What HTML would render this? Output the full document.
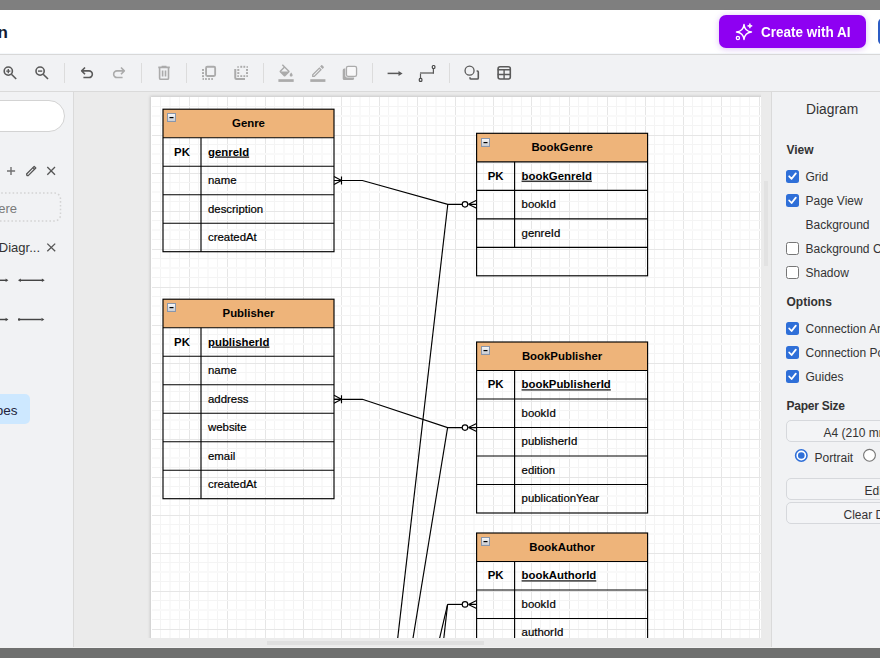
<!DOCTYPE html>
<html><head><meta charset="utf-8">
<style>
*{box-sizing:border-box;margin:0;padding:0}
html,body{width:880px;height:658px;overflow:hidden;background:#fff;font-family:"Liberation Sans",sans-serif}
.abs{position:absolute}
#topstripe{left:0;top:0;width:880px;height:10px;background:#7f7f7f}
#header{left:0;top:10px;width:880px;height:43px;background:#fff;border-bottom:1px solid #f5f8fb;height:44px}
#title{left:-2.5px;top:23px;font-size:17px;font-weight:bold;color:#141a33;line-height:20px;white-space:nowrap}
#aibtn{left:719px;top:15px;width:147px;height:33px;border-radius:7px;background:#8e00f2;box-shadow:0 1px 6px rgba(120,0,220,.25)}
#aitext{left:761px;top:22.5px;font-size:14.5px;font-weight:bold;color:#fff;line-height:18px;white-space:nowrap;transform:scaleX(0.93);transform-origin:0 0}
#bluebtn{left:878px;top:18px;width:20px;height:27px;border-radius:5px;background:#2c5cc5}
#tbtop{left:0;top:54px;width:880px;height:1px;background:#d8d8d8}
#toolbar{left:0;top:55px;width:880px;height:36px;background:#f1f2f4}
#tbbot{left:0;top:91px;width:880px;height:1px;background:#dadada}
#sidebar{left:0;top:92px;width:73px;height:555px;background:#f1f2f4}
#sbborder{left:73px;top:92px;width:1px;height:555px;background:#dadada}
#canvasbg{left:74px;top:92px;width:697px;height:555px;background:#ebebeb}
#rpborder{left:771px;top:92px;width:1px;height:555px;background:#dadada}
#rpanel{left:772px;top:92px;width:108px;height:555px;background:#f1f2f4}
#botline{left:0;top:647px;width:880px;height:1px;background:#f2f2f2}
#botstripe{left:0;top:648px;width:880px;height:10px;background:#6f706f}
.sep{position:absolute;top:63px;width:1px;height:20px;background:#dcdcdc}
svg{position:absolute;left:0;top:0;overflow:visible}
.th{font:bold 11.4px "Liberation Sans",sans-serif;fill:#000}
.tb{font:bold 11.4px "Liberation Sans",sans-serif;fill:#000;text-decoration:underline}
.tr{font:11.4px "Liberation Sans",sans-serif;fill:#000;stroke:#000;stroke-width:0.2}
.ln{stroke:#000;stroke-width:1.15;fill:none}
.cn{stroke:#000;stroke-width:1.15}
.rp{position:absolute;font-size:12px;color:#333;line-height:14px;white-space:nowrap}
.rpb{position:absolute;font-size:12px;font-weight:bold;color:#333;line-height:14px;white-space:nowrap}
.cb{position:absolute;left:786px;width:13px;height:13px;border-radius:2.5px;background:#2f6fd8}
.cbu{position:absolute;left:786px;width:13px;height:13px;border-radius:2.5px;background:#fff;border:1px solid #767676}
.btn{position:absolute;left:786px;width:110px;border:1px solid #d6d8dc;border-radius:5px;background:#f3f4f6}
</style></head><body>
<div id="topstripe" class="abs"></div>
<div id="header" class="abs"></div>
<div id="title" class="abs">n</div>
<div id="aibtn" class="abs"></div>
<svg width="880" height="60" style="left:0;top:0">
  <path d="M744,24.5 Q744.7,31.3 751.5,32 Q744.7,32.7 744,39.5 Q743.3,32.7 736.5,32 Q743.3,31.3 744,24.5 Z" fill="none" stroke="#fff" stroke-width="1.45" stroke-linejoin="round"/>
  <path d="M749.9,23.6 C750.1,25.3 750.5,25.7 752.2,25.9 C750.5,26.1 750.1,26.5 749.9,28.2 C749.7,26.5 749.3,26.1 747.6,25.9 C749.3,25.7 749.7,25.3 749.9,23.6Z" fill="#fff" stroke="#fff" stroke-width="1"/>
  <circle cx="737.9" cy="38" r="1.6" fill="none" stroke="#fff" stroke-width="1.3"/>
</svg>
<div id="aitext" class="abs">Create with AI</div>
<div id="bluebtn" class="abs"></div>
<div id="tbtop" class="abs"></div>
<div id="toolbar" class="abs"></div>
<div id="tbbot" class="abs"></div>
<div class="sep" style="left:64px"></div>
<div class="sep" style="left:141px"></div>
<div class="sep" style="left:186px"></div>
<div class="sep" style="left:263px"></div>
<div class="sep" style="left:372px"></div>
<div class="sep" style="left:449px"></div>
<svg width="880" height="92" style="left:0;top:0">
 <g fill="none" stroke="#5a5a5a" stroke-width="1.6" stroke-linecap="butt">
  <circle cx="8.3" cy="71.1" r="4.1"/><path d="M11.4,74.2 L16.2,79"/><path d="M6.2,71.1 H10.4 M8.3,69 V73.2" stroke-width="1.4"/>
  <circle cx="40.1" cy="71.1" r="4.1"/><path d="M43.2,74.2 L48,79"/><path d="M38,71.1 H42.2" stroke-width="1.4"/>
  <path d="M85,67.5 L81.7,70.85 L85,74.2 M81.7,70.85 H89 A3.35,3.35 0 0 1 89,77.55 H83.4" stroke-linejoin="round"/>
 </g>
 <g fill="none" stroke="#ababab" stroke-width="1.6">
  <path d="M121,67.5 L124.3,70.85 L121,74.2 M124.3,70.85 H117 A3.35,3.35 0 0 0 117,77.55 H122.6" stroke-linejoin="round"/>
  <path d="M158.3,67.4 H169.8 M162.4,67.4 V66.5 H165.7 V67.4"/>
  <path d="M159.6,67.6 V78.2 Q159.6,79.3 160.7,79.3 H167.4 Q168.5,79.3 168.5,78.2 V67.6"/>
  <path d="M162.6,70.6 V76.6 M165.5,70.6 V76.6"/>
  <rect x="206.05" y="66.75" width="9.1" height="9.2" rx="1.2" stroke-width="1.85"/>
  <path d="M235.25,69 V77.8 Q235.25,79 236.45,79 H245" stroke-width="2"/>
 </g>
 <g fill="#ababab">
  <rect x="202" y="69" width="2" height="1.9"/><rect x="202" y="72.1" width="2" height="1.9"/><rect x="202" y="75.2" width="2" height="1.9"/>
  <rect x="202.5" y="78.1" width="1.5" height="1.8"/><rect x="205" y="78.1" width="1.9" height="1.8"/><rect x="208.1" y="78.1" width="1.9" height="1.8"/><rect x="211.2" y="78.1" width="1.8" height="1.8"/>
  <rect x="237.3" y="66.2" width="1.5" height="1.6"/><rect x="240.3" y="65.8" width="1.9" height="2"/><rect x="243.4" y="65.8" width="1.8" height="2"/><rect x="246.5" y="66.2" width="1.5" height="1.6"/>
  <rect x="237.3" y="69" width="2" height="1.9"/><rect x="237.3" y="72.1" width="2" height="1.9"/><rect x="237.3" y="75.2" width="1.6" height="1.8"/>
  <rect x="246" y="69" width="2" height="1.9"/><rect x="246" y="72.1" width="2" height="1.9"/><rect x="246.3" y="75.2" width="1.6" height="1.8"/>
  <rect x="240.3" y="75.2" width="1.9" height="1.8"/><rect x="243.4" y="75.2" width="1.8" height="1.8"/>
 </g>
 <g fill="none" stroke="#ababab" stroke-width="1.6">
  <rect x="346.45" y="66.35" width="10.1" height="10" rx="1.6" fill="#f8f8f9" stroke-width="1.3"/>
 </g>
 <g fill="#ababab">
  <rect x="278.4" y="79.2" width="15.3" height="2.7"/>
  <rect x="310.3" y="79.2" width="15.1" height="2.7"/>
  <path d="M342.7,70.2 Q342.7,68.6 344.3,68.6 H345.3 V75.8 Q345.3,77.5 347,77.5 H354.1 V78.5 Q354.1,80.1 352.5,80.1 H344.3 Q342.7,80.1 342.7,78.5 Z"/>
  <path transform="translate(277.3,64.2) scale(0.73)" d="M16.56 8.94L7.62 0 6.21 1.41l2.38 2.38-5.15 5.15c-.59.59-.59 1.54 0 2.12l5.5 5.5c.29.29.68.44 1.06.44s.77-.15 1.06-.44l5.5-5.5c.59-.58.59-1.53 0-2.12zM5.21 10L10 5.21 14.79 10H5.21zM19 11.5s-2 2.17-2 3.5c0 1.1.9 2 2 2s2-.9 2-2c0-1.33-2-3.5-2-3.5z"/>
  <path transform="translate(310.1,63.1) scale(0.66)" d="M14.06 9.02l.92.92L5.92 19H5v-.92l9.06-9.06M17.66 3c-.25 0-.51.1-.7.29l-1.83 1.83 3.75 3.75 1.83-1.83c.39-.39.39-1.02 0-1.41l-2.34-2.34c-.2-.2-.45-.29-.71-.29zm-3.6 3.19L3 17.25V21h3.75L17.81 9.94l-3.75-3.75z"/>
 </g>
  <g stroke="#5a5a5a" stroke-width="1.5" fill="none">
  <path d="M387.6,73.4 H399"/>
  <path d="M420.5,78 V73.4" stroke-width="1.2"/><path d="M420,73 H434" stroke="#8a8a8a" stroke-width="1.8"/><path d="M433.4,73.4 V68.8" stroke-width="1.2"/>
  <circle cx="469.55" cy="70.7" r="4.5" stroke-width="1.3"/>
  <path d="M476.6,70.95 H477.2 Q478.3,70.95 478.3,72.05 V77.9 Q478.3,79 477.2,79 H471.1 Q470,79 470,77.9 V77.3" stroke-width="1.6"/>
  <rect x="498.1" y="66.8" width="12.2" height="12.2" rx="2" stroke-width="1.6"/>
  <path d="M497.6,69.7 H510.6 M497.6,74.5 H510.6 M504.1,69.7 V79" stroke-width="1.4"/>
 </g>
 <path d="M398.5,70.9 L402.6,73.4 L398.5,75.9 Z" fill="#5a5a5a"/>
  <rect x="419.3" y="78.3" width="2.6" height="3" rx="0.9" fill="none" stroke="#4a4a4a" stroke-width="1.2"/>
 <rect x="432.3" y="65.5" width="2.6" height="3" rx="0.9" fill="none" stroke="#4a4a4a" stroke-width="1.2"/>
</svg>

<div id="sidebar" class="abs"></div>
<div id="sbborder" class="abs"></div>
<div class="abs" style="left:-40px;top:100px;width:105px;height:32px;border-radius:16px;background:#fff;border:1px solid #d3d3d3"></div>
<svg width="80" height="440" style="left:0;top:0">
 <g stroke="#555" stroke-width="1.5" fill="none">
  <path d="M7,171 H15.1 M11,167 V175" stroke="#707070" stroke-width="1.4"/>
  <path d="M47.3,167 L55,174.8 M55,167 L47.3,174.8" stroke-width="1.3"/>
  <path d="M47.3,243.6 L55.2,251.3 M55.2,243.6 L47.3,251.3" stroke-width="1.3"/>
  <path d="M27,175.5 L26.6,174 L34.2,166.4 L35.8,168 L28.2,175.6 Z" stroke-width="1.3" stroke-linejoin="round"/>
 </g>
 <path d="M32.8,167.6 L34.4,169.2" stroke="#555" stroke-width="1.1"/>
 <rect x="-20" y="193" width="80.5" height="28" rx="6" fill="none" stroke="#d4d4d4" stroke-width="1.5" stroke-dasharray="1.6,2.2"/>
 <g stroke="#444" stroke-width="1.45" fill="none">
  <path d="M-5,280.3 H6"/><path d="M20,280.3 H42"/>
  <path d="M-5,319.5 H6"/><path d="M20,319.5 H41.6"/>
 </g>
 <g fill="#444">
  <path d="M5.6,278.5 L8.4,280.3 L5.6,282.1 Z"/>
  <path d="M20.8,278.5 L18,280.3 L20.8,282.1 Z"/>
  <path d="M41.9,278.5 L44.7,280.3 L41.9,282.1 Z"/>
  <path d="M5.6,317.7 L8.4,319.5 L5.6,321.3 Z"/>
  <rect x="18" y="318.3" width="2.2" height="2.4" rx="0.8"/>
  <path d="M41.5,317.7 L44.3,319.5 L41.5,321.3 Z"/>
 </g>
</svg>
<div class="abs" style="left:-40px;top:200.5px;font-size:13px;color:#7a7a7a;line-height:16px;white-space:nowrap;width:57px;text-align:right">ere</div>
<div class="abs" style="left:-20px;top:240px;font-size:13px;color:#333;line-height:16px;white-space:nowrap;width:60px;text-align:right">Diagr...</div>
<div class="abs" style="left:-30px;top:394px;width:60px;height:30px;border-radius:5px;background:#cde8ff"></div>
<div class="abs" style="left:-20px;top:403px;font-size:13.5px;color:#23233a;line-height:16px;white-space:nowrap;width:37.5px;text-align:right">pes</div>

<div id="canvasbg" class="abs"></div>
<svg width="880" height="658" style="left:0;top:0">
 <defs>
  <linearGradient id="cg" x1="0" y1="0" x2="0" y2="1"><stop offset="0" stop-color="#fafafa"/><stop offset="1" stop-color="#c4c8d0"/></linearGradient>
  <clipPath id="vp"><rect x="74" y="92" width="687" height="546"/></clipPath>
  <filter id="psh" x="-5%" y="-5%" width="110%" height="110%"><feGaussianBlur stdDeviation="1.5"/></filter>
 </defs>
 <g clip-path="url(#vp)">
  <rect x="150" y="96" width="700" height="700" fill="#c8c8c8" filter="url(#psh)"/>
  <rect x="151" y="97" width="700" height="700" fill="#fff"/>
  <rect x="160" y="97" width="1" height="541" fill="#f4f4f4"/>
<rect x="169" y="97" width="2" height="541" fill="#f9f9f9"/>
<rect x="179" y="97" width="1" height="541" fill="#f4f4f4"/>
<rect x="189" y="97" width="1" height="541" fill="#e6e6e6"/>
<rect x="198" y="97" width="1" height="541" fill="#f4f4f4"/>
<rect x="207" y="97" width="2" height="541" fill="#f9f9f9"/>
<rect x="217" y="97" width="1" height="541" fill="#f4f4f4"/>
<rect x="227" y="97" width="1" height="541" fill="#e6e6e6"/>
<rect x="236" y="97" width="1" height="541" fill="#f4f4f4"/>
<rect x="245" y="97" width="2" height="541" fill="#f9f9f9"/>
<rect x="255" y="97" width="1" height="541" fill="#f4f4f4"/>
<rect x="265" y="97" width="1" height="541" fill="#e6e6e6"/>
<rect x="274" y="97" width="1" height="541" fill="#f4f4f4"/>
<rect x="283" y="97" width="2" height="541" fill="#f9f9f9"/>
<rect x="293" y="97" width="1" height="541" fill="#f4f4f4"/>
<rect x="303" y="97" width="1" height="541" fill="#e6e6e6"/>
<rect x="312" y="97" width="1" height="541" fill="#f4f4f4"/>
<rect x="321" y="97" width="2" height="541" fill="#f9f9f9"/>
<rect x="331" y="97" width="1" height="541" fill="#f4f4f4"/>
<rect x="341" y="97" width="1" height="541" fill="#e6e6e6"/>
<rect x="350" y="97" width="1" height="541" fill="#f4f4f4"/>
<rect x="359" y="97" width="2" height="541" fill="#f9f9f9"/>
<rect x="369" y="97" width="1" height="541" fill="#f4f4f4"/>
<rect x="379" y="97" width="1" height="541" fill="#e6e6e6"/>
<rect x="388" y="97" width="1" height="541" fill="#f4f4f4"/>
<rect x="397" y="97" width="2" height="541" fill="#f9f9f9"/>
<rect x="407" y="97" width="1" height="541" fill="#f4f4f4"/>
<rect x="417" y="97" width="1" height="541" fill="#e6e6e6"/>
<rect x="426" y="97" width="1" height="541" fill="#f4f4f4"/>
<rect x="435" y="97" width="2" height="541" fill="#f9f9f9"/>
<rect x="445" y="97" width="1" height="541" fill="#f4f4f4"/>
<rect x="455" y="97" width="1" height="541" fill="#e6e6e6"/>
<rect x="464" y="97" width="1" height="541" fill="#f4f4f4"/>
<rect x="473" y="97" width="2" height="541" fill="#f9f9f9"/>
<rect x="483" y="97" width="1" height="541" fill="#f4f4f4"/>
<rect x="493" y="97" width="1" height="541" fill="#e6e6e6"/>
<rect x="502" y="97" width="1" height="541" fill="#f4f4f4"/>
<rect x="511" y="97" width="2" height="541" fill="#f9f9f9"/>
<rect x="521" y="97" width="1" height="541" fill="#f4f4f4"/>
<rect x="531" y="97" width="1" height="541" fill="#e6e6e6"/>
<rect x="540" y="97" width="1" height="541" fill="#f4f4f4"/>
<rect x="549" y="97" width="2" height="541" fill="#f9f9f9"/>
<rect x="559" y="97" width="1" height="541" fill="#f4f4f4"/>
<rect x="569" y="97" width="1" height="541" fill="#e6e6e6"/>
<rect x="578" y="97" width="1" height="541" fill="#f4f4f4"/>
<rect x="587" y="97" width="2" height="541" fill="#f9f9f9"/>
<rect x="597" y="97" width="1" height="541" fill="#f4f4f4"/>
<rect x="607" y="97" width="1" height="541" fill="#e6e6e6"/>
<rect x="616" y="97" width="1" height="541" fill="#f4f4f4"/>
<rect x="625" y="97" width="2" height="541" fill="#f9f9f9"/>
<rect x="635" y="97" width="1" height="541" fill="#f4f4f4"/>
<rect x="645" y="97" width="1" height="541" fill="#e6e6e6"/>
<rect x="654" y="97" width="1" height="541" fill="#f4f4f4"/>
<rect x="663" y="97" width="2" height="541" fill="#f9f9f9"/>
<rect x="673" y="97" width="1" height="541" fill="#f4f4f4"/>
<rect x="683" y="97" width="1" height="541" fill="#e6e6e6"/>
<rect x="692" y="97" width="1" height="541" fill="#f4f4f4"/>
<rect x="701" y="97" width="2" height="541" fill="#f9f9f9"/>
<rect x="711" y="97" width="1" height="541" fill="#f4f4f4"/>
<rect x="721" y="97" width="1" height="541" fill="#e6e6e6"/>
<rect x="730" y="97" width="1" height="541" fill="#f4f4f4"/>
<rect x="739" y="97" width="2" height="541" fill="#f9f9f9"/>
<rect x="749" y="97" width="1" height="541" fill="#f4f4f4"/>
<rect x="759" y="97" width="1" height="541" fill="#e6e6e6"/>
<rect x="152" y="106" width="609" height="1" fill="#f4f4f4"/>
<rect x="152" y="115" width="609" height="2" fill="#f9f9f9"/>
<rect x="152" y="125" width="609" height="1" fill="#f4f4f4"/>
<rect x="152" y="135" width="609" height="1" fill="#e6e6e6"/>
<rect x="152" y="144" width="609" height="1" fill="#f4f4f4"/>
<rect x="152" y="153" width="609" height="2" fill="#f9f9f9"/>
<rect x="152" y="163" width="609" height="1" fill="#f4f4f4"/>
<rect x="152" y="173" width="609" height="1" fill="#e6e6e6"/>
<rect x="152" y="182" width="609" height="1" fill="#f4f4f4"/>
<rect x="152" y="191" width="609" height="2" fill="#f9f9f9"/>
<rect x="152" y="201" width="609" height="1" fill="#f4f4f4"/>
<rect x="152" y="211" width="609" height="1" fill="#e6e6e6"/>
<rect x="152" y="220" width="609" height="1" fill="#f4f4f4"/>
<rect x="152" y="229" width="609" height="2" fill="#f9f9f9"/>
<rect x="152" y="239" width="609" height="1" fill="#f4f4f4"/>
<rect x="152" y="249" width="609" height="1" fill="#e6e6e6"/>
<rect x="152" y="258" width="609" height="1" fill="#f4f4f4"/>
<rect x="152" y="267" width="609" height="2" fill="#f9f9f9"/>
<rect x="152" y="277" width="609" height="1" fill="#f4f4f4"/>
<rect x="152" y="287" width="609" height="1" fill="#e6e6e6"/>
<rect x="152" y="296" width="609" height="1" fill="#f4f4f4"/>
<rect x="152" y="305" width="609" height="2" fill="#f9f9f9"/>
<rect x="152" y="315" width="609" height="1" fill="#f4f4f4"/>
<rect x="152" y="325" width="609" height="1" fill="#e6e6e6"/>
<rect x="152" y="334" width="609" height="1" fill="#f4f4f4"/>
<rect x="152" y="343" width="609" height="2" fill="#f9f9f9"/>
<rect x="152" y="353" width="609" height="1" fill="#f4f4f4"/>
<rect x="152" y="363" width="609" height="1" fill="#e6e6e6"/>
<rect x="152" y="372" width="609" height="1" fill="#f4f4f4"/>
<rect x="152" y="381" width="609" height="2" fill="#f9f9f9"/>
<rect x="152" y="391" width="609" height="1" fill="#f4f4f4"/>
<rect x="152" y="401" width="609" height="1" fill="#e6e6e6"/>
<rect x="152" y="410" width="609" height="1" fill="#f4f4f4"/>
<rect x="152" y="419" width="609" height="2" fill="#f9f9f9"/>
<rect x="152" y="429" width="609" height="1" fill="#f4f4f4"/>
<rect x="152" y="439" width="609" height="1" fill="#e6e6e6"/>
<rect x="152" y="448" width="609" height="1" fill="#f4f4f4"/>
<rect x="152" y="457" width="609" height="2" fill="#f9f9f9"/>
<rect x="152" y="467" width="609" height="1" fill="#f4f4f4"/>
<rect x="152" y="477" width="609" height="1" fill="#e6e6e6"/>
<rect x="152" y="486" width="609" height="1" fill="#f4f4f4"/>
<rect x="152" y="495" width="609" height="2" fill="#f9f9f9"/>
<rect x="152" y="505" width="609" height="1" fill="#f4f4f4"/>
<rect x="152" y="515" width="609" height="1" fill="#e6e6e6"/>
<rect x="152" y="524" width="609" height="1" fill="#f4f4f4"/>
<rect x="152" y="533" width="609" height="2" fill="#f9f9f9"/>
<rect x="152" y="543" width="609" height="1" fill="#f4f4f4"/>
<rect x="152" y="553" width="609" height="1" fill="#e6e6e6"/>
<rect x="152" y="562" width="609" height="1" fill="#f4f4f4"/>
<rect x="152" y="571" width="609" height="2" fill="#f9f9f9"/>
<rect x="152" y="581" width="609" height="1" fill="#f4f4f4"/>
<rect x="152" y="591" width="609" height="1" fill="#e6e6e6"/>
<rect x="152" y="600" width="609" height="1" fill="#f4f4f4"/>
<rect x="152" y="609" width="609" height="2" fill="#f9f9f9"/>
<rect x="152" y="619" width="609" height="1" fill="#f4f4f4"/>
<rect x="152" y="629" width="609" height="1" fill="#e6e6e6"/>
  <rect x="163.0" y="109.2" width="171" height="28.500" fill="#eeb47a"/>
<g transform="translate(167,113)"><rect x="0.5" y="0.5" width="8" height="8" fill="url(#cg)" stroke="#8a96aa" stroke-width="1"/><rect x="2.5" y="4" width="4" height="1.2" fill="#000"/></g>
<text x="248.50" y="126.95" text-anchor="middle" class="th">Genre</text>
<text x="182.00" y="155.55" text-anchor="middle" class="th">PK</text>
<text x="208.00" y="155.55" class="tb">genreId</text>
<text x="208.00" y="184.05" class="tr">name</text>
<text x="208.00" y="212.55" class="tr">description</text>
<text x="208.00" y="241.05" class="tr">createdAt</text>
<line x1="163.0" y1="137.70" x2="334.0" y2="137.70" class="ln"/>
<line x1="163.0" y1="166.20" x2="334.0" y2="166.20" class="ln"/>
<line x1="163.0" y1="194.70" x2="334.0" y2="194.70" class="ln"/>
<line x1="163.0" y1="223.20" x2="334.0" y2="223.20" class="ln"/>
<line x1="201.0" y1="137.70" x2="201.0" y2="251.70" class="ln"/>
<rect x="163.0" y="109.2" width="171" height="142.500" fill="none" class="ln"/>
<rect x="163.0" y="299.2" width="171" height="28.500" fill="#eeb47a"/>
<g transform="translate(167,303)"><rect x="0.5" y="0.5" width="8" height="8" fill="url(#cg)" stroke="#8a96aa" stroke-width="1"/><rect x="2.5" y="4" width="4" height="1.2" fill="#000"/></g>
<text x="248.50" y="316.95" text-anchor="middle" class="th">Publisher</text>
<text x="182.00" y="345.55" text-anchor="middle" class="th">PK</text>
<text x="208.00" y="345.55" class="tb">publisherId</text>
<text x="208.00" y="374.05" class="tr">name</text>
<text x="208.00" y="402.55" class="tr">address</text>
<text x="208.00" y="431.05" class="tr">website</text>
<text x="208.00" y="459.55" class="tr">email</text>
<text x="208.00" y="488.05" class="tr">createdAt</text>
<line x1="163.0" y1="327.70" x2="334.0" y2="327.70" class="ln"/>
<line x1="163.0" y1="356.20" x2="334.0" y2="356.20" class="ln"/>
<line x1="163.0" y1="384.70" x2="334.0" y2="384.70" class="ln"/>
<line x1="163.0" y1="413.20" x2="334.0" y2="413.20" class="ln"/>
<line x1="163.0" y1="441.70" x2="334.0" y2="441.70" class="ln"/>
<line x1="163.0" y1="470.20" x2="334.0" y2="470.20" class="ln"/>
<line x1="201.0" y1="327.70" x2="201.0" y2="498.70" class="ln"/>
<rect x="163.0" y="299.2" width="171" height="199.500" fill="none" class="ln"/>
<rect x="476.6" y="133.3" width="171" height="28.500" fill="#eeb47a"/>
<g transform="translate(481,138)"><rect x="0.5" y="0.5" width="8" height="8" fill="url(#cg)" stroke="#8a96aa" stroke-width="1"/><rect x="2.5" y="4" width="4" height="1.2" fill="#000"/></g>
<text x="562.10" y="151.05" text-anchor="middle" class="th">BookGenre</text>
<text x="495.60" y="179.65" text-anchor="middle" class="th">PK</text>
<text x="521.60" y="179.65" class="tb">bookGenreId</text>
<text x="521.60" y="208.15" class="tr">bookId</text>
<text x="521.60" y="236.65" class="tr">genreId</text>
<line x1="476.6" y1="161.80" x2="647.6" y2="161.80" class="ln"/>
<line x1="476.6" y1="190.30" x2="647.6" y2="190.30" class="ln"/>
<line x1="476.6" y1="218.80" x2="647.6" y2="218.80" class="ln"/>
<line x1="476.6" y1="247.30" x2="647.6" y2="247.30" class="ln"/>
<line x1="514.6" y1="161.80" x2="514.6" y2="247.30" class="ln"/>
<rect x="476.6" y="133.3" width="171" height="142.500" fill="none" class="ln"/>
<rect x="476.6" y="342.0" width="171" height="28.500" fill="#eeb47a"/>
<g transform="translate(481,346)"><rect x="0.5" y="0.5" width="8" height="8" fill="url(#cg)" stroke="#8a96aa" stroke-width="1"/><rect x="2.5" y="4" width="4" height="1.2" fill="#000"/></g>
<text x="562.10" y="359.75" text-anchor="middle" class="th">BookPublisher</text>
<text x="495.60" y="388.35" text-anchor="middle" class="th">PK</text>
<text x="521.60" y="388.35" class="tb">bookPublisherId</text>
<text x="521.60" y="416.85" class="tr">bookId</text>
<text x="521.60" y="445.35" class="tr">publisherId</text>
<text x="521.60" y="473.85" class="tr">edition</text>
<text x="521.60" y="502.35" class="tr">publicationYear</text>
<line x1="476.6" y1="370.50" x2="647.6" y2="370.50" class="ln"/>
<line x1="476.6" y1="399.00" x2="647.6" y2="399.00" class="ln"/>
<line x1="476.6" y1="427.50" x2="647.6" y2="427.50" class="ln"/>
<line x1="476.6" y1="456.00" x2="647.6" y2="456.00" class="ln"/>
<line x1="476.6" y1="484.50" x2="647.6" y2="484.50" class="ln"/>
<line x1="514.6" y1="370.50" x2="514.6" y2="513.00" class="ln"/>
<rect x="476.6" y="342.0" width="171" height="171.000" fill="none" class="ln"/>
<rect x="476.6" y="533.0" width="171" height="28.500" fill="#eeb47a"/>
<g transform="translate(481,537)"><rect x="0.5" y="0.5" width="8" height="8" fill="url(#cg)" stroke="#8a96aa" stroke-width="1"/><rect x="2.5" y="4" width="4" height="1.2" fill="#000"/></g>
<text x="562.10" y="550.75" text-anchor="middle" class="th">BookAuthor</text>
<text x="495.60" y="579.35" text-anchor="middle" class="th">PK</text>
<text x="521.60" y="579.35" class="tb">bookAuthorId</text>
<text x="521.60" y="607.85" class="tr">bookId</text>
<text x="521.60" y="636.35" class="tr">authorId</text>
<text x="521.60" y="664.85" class="tr">bio</text>
<line x1="476.6" y1="561.50" x2="647.6" y2="561.50" class="ln"/>
<line x1="476.6" y1="590.00" x2="647.6" y2="590.00" class="ln"/>
<line x1="476.6" y1="618.50" x2="647.6" y2="618.50" class="ln"/>
<line x1="476.6" y1="647.00" x2="647.6" y2="647.00" class="ln"/>
<line x1="514.6" y1="561.50" x2="514.6" y2="675.50" class="ln"/>
<rect x="476.6" y="533.0" width="171" height="142.500" fill="none" class="ln"/>
  <path d="M334,180.5 L362.4,180.5 L447.8,204.3 L462,204.3" class="cn" fill="none"/>
<path d="M334.0,176.5 L341.50,180.5 M334.0,184.5 L341.50,180.5 M334.0,180.5 L341.50,180.5 M341.50,176.5 L341.50,184.5" class="cn"/>
<path d="M468.40,204.3 L476.6,200.3 M468.40,204.3 L476.6,208.3 M468.40,204.3 L476.6,204.3" class="cn"/><circle cx="465.00" cy="204.3" r="2.75" fill="#fff" class="cn"/>
<path d="M334,399.3 L362.4,399.3 L447.6,427.6 L462,427.6" class="cn" fill="none"/>
<path d="M334.0,395.3 L341.50,399.3 M334.0,403.3 L341.50,399.3 M334.0,399.3 L341.50,399.3 M341.50,395.3 L341.50,403.3" class="cn"/>
<path d="M468.40,427.6 L476.6,423.6 M468.40,427.6 L476.6,431.6 M468.40,427.6 L476.6,427.6" class="cn"/><circle cx="465.00" cy="427.6" r="2.75" fill="#fff" class="cn"/>
<path d="M447.6,604.4 L462,604.4" class="cn" fill="none"/>
<path d="M468.40,604.4 L476.6,600.4 M468.40,604.4 L476.6,608.4 M468.40,604.4 L476.6,604.4" class="cn"/><circle cx="465.00" cy="604.4" r="2.75" fill="#fff" class="cn"/>
<path d="M447.8,204.3 L397.5,640" class="cn" fill="none"/>
<path d="M447.6,427.6 L412.7,640" class="cn" fill="none"/>
<path d="M447.6,604.4 L439.2,640" class="cn" fill="none"/>
<path d="M447.6,604.4 L443.6,640" class="cn" fill="none"/>
 </g>
 <rect x="267" y="641" width="217" height="4" fill="#dfdfdf"/>
 <rect x="764" y="181" width="4" height="85" fill="#e2e2e2"/>
</svg>

<div id="rpborder" class="abs"></div>
<div id="rpanel" class="abs"></div>
<div class="rp" style="left:806px;top:101.5px;font-size:13.8px;line-height:16px">Diagram</div>
<div class="rpb" style="left:786.5px;top:143px">View</div>
<div class="cb" style="top:170px"></div>
<div class="rp" style="left:805.5px;top:170px">Grid</div>
<div class="cb" style="top:194px"></div>
<div class="rp" style="left:805.5px;top:194px">Page View</div>
<div class="rp" style="left:805.5px;top:218px">Background</div>
<div class="cbu" style="top:242px"></div>
<div class="rp" style="left:805.5px;top:242px">Background Color</div>
<div class="cbu" style="top:266px"></div>
<div class="rp" style="left:805.5px;top:266px">Shadow</div>
<div class="rpb" style="left:786.5px;top:295px">Options</div>
<div class="cb" style="top:322px"></div>
<div class="rp" style="left:805.5px;top:322px">Connection Arrows</div>
<div class="cb" style="top:346px"></div>
<div class="rp" style="left:805.5px;top:346px">Connection Points</div>
<div class="cb" style="top:370px"></div>
<div class="rp" style="left:805.5px;top:370px">Guides</div>
<div class="rpb" style="left:786.5px;top:399px;letter-spacing:-0.25px">Paper Size</div>
<div class="btn" style="top:420px;height:22px"></div>
<div class="rp" style="left:823.5px;top:426px">A4 (210 mm x 297 mm)</div>
<div class="rp" style="left:814.5px;top:451px">Portrait</div>
<div class="btn" style="top:478px;height:22px"></div>
<div class="rp" style="left:864.5px;top:484px">Edit Data</div>
<div class="btn" style="top:502px;height:22px"></div>
<div class="rp" style="left:843.5px;top:508px">Clear Default Style</div>
<svg width="880" height="658" style="left:0;top:0">
 <g fill="none" stroke="#fff" stroke-width="1.8" stroke-linecap="round" stroke-linejoin="round">
  <path d="M789.2,176.3 L791.6,178.8 L795.8,173.4"/>
  <path d="M789.2,200.5 L791.6,203 L795.8,197.6"/>
  <path d="M789.2,328.5 L791.6,331 L795.8,325.6"/>
  <path d="M789.2,352.5 L791.6,355 L795.8,349.6"/>
  <path d="M789.2,376.5 L791.6,379 L795.8,373.6"/>
 </g>
 <circle cx="801.3" cy="455.5" r="5.7" fill="#fff" stroke="#2f6fd8" stroke-width="1.6"/>
 <circle cx="801.3" cy="455.5" r="3.3" fill="#2f6fd8"/>
 <circle cx="869.5" cy="455.3" r="5.9" fill="#fff" stroke="#767676" stroke-width="1.1"/>
</svg>
<div id="botline" class="abs"></div>
<div id="botstripe" class="abs"></div>
</body></html>
